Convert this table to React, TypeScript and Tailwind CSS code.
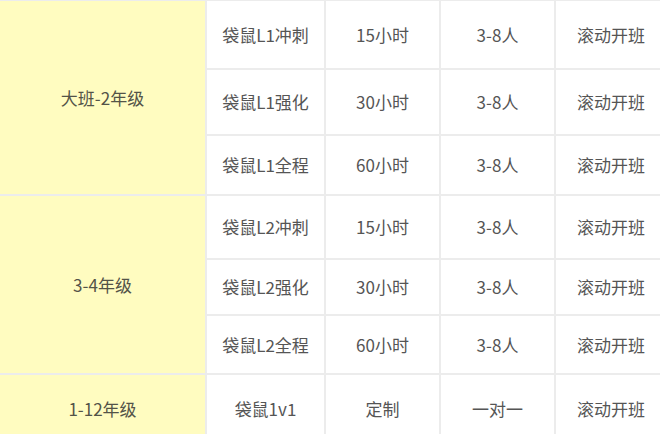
import React from "react";

const rows: { h: number; group?: { label: string; span: number }; cells: string[] }[] = [
  { h: 69, group: { label: "大班-2年级", span: 3 }, cells: ["袋鼠L1冲刺", "15小时", "3-8人", "滚动开班"] },
  { h: 66, cells: ["袋鼠L1强化", "30小时", "3-8人", "滚动开班"] },
  { h: 60, cells: ["袋鼠L1全程", "60小时", "3-8人", "滚动开班"] },
  { h: 64, group: { label: "3-4年级", span: 3 }, cells: ["袋鼠L2冲刺", "15小时", "3-8人", "滚动开班"] },
  { h: 56, cells: ["袋鼠L2强化", "30小时", "3-8人", "滚动开班"] },
  { h: 59, cells: ["袋鼠L2全程", "60小时", "3-8人", "滚动开班"] },
  { h: 70, group: { label: "1-12年级", span: 1 }, cells: ["袋鼠1v1", "定制", "一对一", "滚动开班"] },
];

export default function App() {
  return (
    <div className="w-[660px] h-[434px] overflow-hidden bg-white">
      <table
        className="table-fixed border-collapse w-[667px] -mt-px text-[17px] text-[#555555]"
        style={{ fontFamily: '"Noto Sans CJK SC", "Noto Sans", sans-serif' }}
      >
        <colgroup>
          <col className="w-[206px]" />
          <col className="w-[119px]" />
          <col className="w-[115px]" />
          <col className="w-[115px]" />
          <col className="w-[112px]" />
        </colgroup>
        <tbody>
          {rows.map((r, i) => (
            <tr key={i} style={{ height: r.h }}>
              {r.group && (
                <td
                  rowSpan={r.group.span}
                  className="bg-[#fffcc0] border-2 border-l-0 border-[#ececec] text-center align-middle text-[#535348]"
                >
                  {r.group.label}
                </td>
              )}
              {r.cells.map((c, j) => (
                <td key={j} className="border-2 border-[#ececec] text-center align-middle p-0">
                  {c}
                </td>
              ))}
            </tr>
          ))}
        </tbody>
      </table>
    </div>
  );
}
